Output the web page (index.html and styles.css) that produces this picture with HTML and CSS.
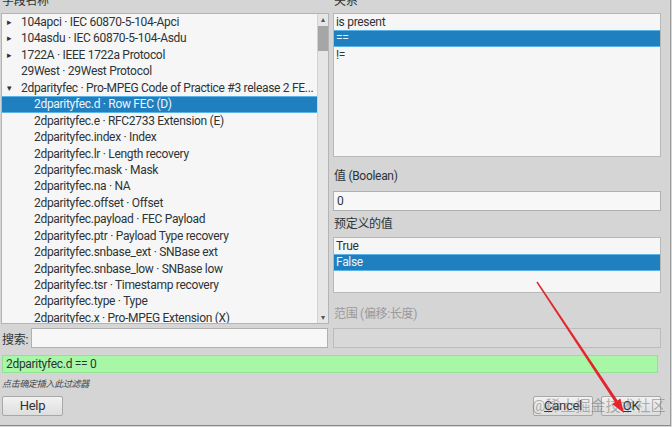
FILE: index.html
```html
<!DOCTYPE html>
<html lang="zh-CN">
<head>
    <meta charset="UTF-8">
    <title>显示过滤器表达式</title>
    <link rel="stylesheet" href="styles.css">
</head>
<body>
    <div class="dialog">
        <div class="main">
            <div class="col">
                <div class="label">字段名称</div>
                <div class="tree">
                    <div class="tree-rows">
                        <div class="row top"><span class="arrow">▸</span>104apci · IEC 60870-5-104-Apci</div>
                        <div class="row top"><span class="arrow">▸</span>104asdu · IEC 60870-5-104-Asdu</div>
                        <div class="row top"><span class="arrow">▸</span>1722A · IEEE 1722a Protocol</div>
                        <div class="row top"><span class="arrow"></span>29West · 29West Protocol</div>
                        <div class="row top"><span class="arrow">▾</span>2dparityfec · Pro-MPEG Code of Practice #3 release 2 FE...</div>
                        <div class="row child selected">2dparityfec.d · Row FEC (D)</div>
                        <div class="row child">2dparityfec.e · RFC2733 Extension (E)</div>
                        <div class="row child">2dparityfec.index · Index</div>
                        <div class="row child">2dparityfec.lr · Length recovery</div>
                        <div class="row child">2dparityfec.mask · Mask</div>
                        <div class="row child">2dparityfec.na · NA</div>
                        <div class="row child">2dparityfec.offset · Offset</div>
                        <div class="row child">2dparityfec.payload · FEC Payload</div>
                        <div class="row child">2dparityfec.ptr · Payload Type recovery</div>
                        <div class="row child">2dparityfec.snbase_ext · SNBase ext</div>
                        <div class="row child">2dparityfec.snbase_low · SNBase low</div>
                        <div class="row child">2dparityfec.tsr · Timestamp recovery</div>
                        <div class="row child">2dparityfec.type · Type</div>
                        <div class="row child">2dparityfec.x · Pro-MPEG Extension (X)</div>
                    </div>
                    <div class="scroll">
                        <div class="scroll-btn">▴</div>
                        <div class="thumb"></div>
                        <div class="scroll-fill"></div>
                        <div class="scroll-btn">▾</div>
                    </div>
                </div>
                <div class="search">
                    <span class="search-label">搜索:</span>
                    <div class="input search-input"></div>
                </div>
            </div>

            <div class="col">
                <div class="label">关系</div>
                <div class="list rel-list">
                    <div class="row">is present</div>
                    <div class="row selected">==</div>
                    <div class="row">!=</div>
                </div>
                <div class="label value-label">值 (Boolean)</div>
                <div class="input value-input">0</div>
                <div class="label pre-label">预定义的值</div>
                <div class="list pre-list">
                    <div class="row">True</div>
                    <div class="row selected">False</div>
                </div>
                <div class="label range-label">范围 (偏移:长度)</div>
                <div class="input range-input"></div>
            </div>
        </div>

        <div class="filter">2dparityfec.d == 0</div>
        <div class="hint">点击确定插入此过滤器</div>

        <div class="buttons">
            <div class="btn">Help</div>
            <div class="btn-group">
                <div class="btn"><u>C</u>ancel</div>
                <div class="btn"><u>O</u>K</div>
            </div>
        </div>
    </div>

    <!-- 截图上的标注 -->
    <div class="watermark">@稀土掘金技术社区</div>
    <svg class="mark" width="672" height="427" viewBox="0 0 672 427">
        <polygon points="536.4,282.4 537.6,281.6 617.6,400.4 615,402.2" fill="#e2262c"/>
        <polygon points="624,413 620.4,398.5 612.1,404.1" fill="#e2262c"/>
    </svg>
</body>
</html>
```

FILE: styles.css
```css
* {
    box-sizing: border-box;
    margin: 0;
    padding: 0;
}

body {
    width: 672px;
    height: 427px;
    overflow: hidden;
    position: relative;
    background: #d5d5d5;
    font-family: Roboto, 'Noto Sans CJK SC', sans-serif;
    font-size: 12px;
    letter-spacing: -0.3px;
    color: #2e3436;
}

.dialog {
    margin-top: -7px;
    height: 433px;
    width: 671px;
    padding-left: 1px;
    border-bottom: 1px solid #8a8a8a;
    border-right: 1px solid #9c9c9c;
}

.main {
    display: grid;
    grid-template-columns: 328px 328px;
    column-gap: 4px;
}

.col {
    display: flex;
    flex-direction: column;
}

.label {
    height: 17px;
    line-height: 17px;
    padding-left: 1px;
    white-space: nowrap;
}

/* 字段树 */
.tree {
    margin-top: 3px;
    height: 311px;
    border: 1px solid #b4b4b4;
    background: #f6f6f6;
    display: flex;
}

.tree-rows {
    flex: 1;
    min-width: 0;
    overflow: hidden;
}

.row {
    height: 16.44px;
    line-height: 16.44px;
    white-space: nowrap;
    overflow: hidden;
}

.row.selected {
    background: #1f7fbf;
    color: #eef5fb;
    box-shadow: inset 0 1px 0 #5bb4e8, inset 0 -1px 0 #5bb4e8;
}

.tree .row.top {
    padding-left: 5px;
}

.tree .row.child {
    padding-left: 32px;
}

.arrow {
    display: inline-block;
    width: 14px;
    font-size: 9px;
    color: #333;
    vertical-align: top;
}

.scroll {
    flex-shrink: 0;
    width: 11px;
    background: #e6e6e6;
    border-left: 1px solid #d2d2d2;
    display: flex;
    flex-direction: column;
}

.scroll-btn {
    height: 11px;
    font-size: 8px;
    line-height: 11px;
    text-align: center;
    color: #555;
}

.thumb {
    margin-top: 1px;
    height: 25px;
    background: #a6a6a6;
}

.scroll-fill {
    flex: 1;
}

.search {
    margin-top: 4px;
    display: flex;
    align-items: center;
}

.search-label {
    flex-shrink: 0;
    width: 30px;
    padding-left: 1px;
    white-space: nowrap;
}

.input {
    height: 20px;
    line-height: 18px;
    border: 1px solid #b0b0b0;
    background: #f7f7f7;
    padding-left: 3px;
}

.search-input {
    flex: 1;
    margin-right: 1px;
}

/* 右侧 */
.list {
    border: 1px solid #b8b8b8;
    background: #f6f6f6;
    overflow: hidden;
}

.list .row {
    padding-left: 2px;
}

.rel-list {
    margin-top: 3px;
    height: 144px;
}

.value-label {
    margin-top: 11px;
}

.value-input {
    margin-top: 6px;
}

.pre-label {
    margin-top: 5px;
}

.pre-list {
    margin-top: 4px;
    height: 56px;
}

.range-label {
    margin-top: 13px;
    color: #9a9a9a;
}

.range-input {
    margin-top: 5px;
    background: #d8d8d8;
    border-color: #bcbcbc;
}

/* 底部 */
.filter {
    margin-top: 7px;
    margin-left: 1px;
    width: 656px;
    height: 18px;
    line-height: 16px;
    padding-left: 3px;
    background: #a7f7a7;
    border: 1px solid #94e094;
}

.hint {
    margin-top: 5px;
    height: 12px;
    line-height: 12px;
    font-size: 9px;
    font-style: italic;
    color: #444;
    padding-left: 1px;
}

.buttons {
    margin-top: 6px;
    width: 660px;
    display: flex;
    justify-content: space-between;
    padding-left: 1px;
}

.btn-group {
    display: flex;
    gap: 8px;
}

.btn {
    width: 61px;
    height: 20px;
    line-height: 18px;
    font-size: 13px;
    text-align: center;
    border: 1px solid #a8a8a8;
    border-radius: 2px;
    background: linear-gradient(#f2f2f2, #dedede);
}

.btn-group .btn {
    width: 60px;
}

.watermark {
    position: absolute;
    left: 532px;
    top: 396px;
    font-size: 15px;
    line-height: 20px;
    letter-spacing: 0;
    color: rgba(110, 110, 110, 0.5);
    white-space: nowrap;
}

.mark {
    position: absolute;
    left: 0;
    top: 0;
}
```
